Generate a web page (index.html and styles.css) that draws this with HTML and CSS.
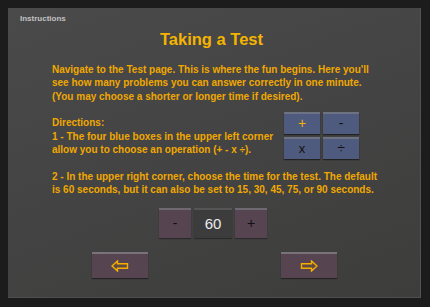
FILE: index.html
```html
<!DOCTYPE html>
<html>
<head>
<meta charset="utf-8">
<link rel="stylesheet" href="styles.css">
</head>
<body>
<div class="panel">
  <div class="label">Instructions</div>
  <div class="content">
    <h1 class="title">Taking a Test</h1>
    <p class="para">Navigate to the Test page. This is where the fun begins. Here you'll<br>see how many problems you can answer correctly in one minute.<br>(You may choose a shorter or longer time if desired).</p>
    <div class="dir-row">
      <p class="para dir-text">Directions:<br>1 - The four blue boxes in the upper left corner<br>allow you to choose an operation (+ - x ÷).</p>
      <div class="ops">
        <div class="op op-active">+</div>
        <div class="op">-</div>
        <div class="op op-x">x</div>
        <div class="op">÷</div>
      </div>
    </div>
    <p class="para">2 - In the upper right corner, choose the time for the test. The default<br>is 60 seconds, but it can also be set to 15, 30, 45, 75, or 90 seconds.</p>
    <div class="timer">
      <div class="tbtn">-</div>
      <div class="tval">60</div>
      <div class="tbtn">+</div>
    </div>
    <div class="nav">
      <div class="navbtn">
        <svg width="18" height="12" viewBox="0 0 18 12"><path d="M1 6 L6.5 1 L6.5 3.8 L16.5 3.8 L16.5 8.2 L6.5 8.2 L6.5 11 Z" fill="#5e4a3e" stroke="#f5ae00" stroke-width="1.4" stroke-linejoin="miter"/></svg>
      </div>
      <div class="navbtn">
        <svg width="18" height="12" viewBox="0 0 18 12"><path d="M17 6 L11.5 1 L11.5 3.8 L1.5 3.8 L1.5 8.2 L11.5 8.2 L11.5 11 Z" fill="#5e4a3e" stroke="#f5ae00" stroke-width="1.4" stroke-linejoin="miter"/></svg>
      </div>
    </div>
  </div>
</div>
</body>
</html>
```
FILE: styles.css
```css
html, body {
  margin: 0;
  padding: 0;
}
body {
  background: #1c1c1c;
  width: 430px;
  height: 307px;
  overflow: hidden;
  font-family: "Liberation Sans", Arial, sans-serif;
}
.panel {
  margin: 8px 0 0 8px;
  width: 413px;
  height: 290px;
  box-sizing: border-box;
  background: linear-gradient(160deg, #4a4a4a 0%, #444444 45%, #3d3d3c 100%);
  border-right: 1px solid #525252;
  border-bottom: 1px solid #4e4e4e;
  padding-top: 6px;
}
.label {
  padding-left: 12px;
  font-size: 8px;
  line-height: 10px;
  font-weight: bold;
  color: #c2c2c2;
}
.content {
  padding-left: 44px;
  padding-right: 49px;
}
.title {
  margin: 5px 0 0 0;
  font-size: 16.5px;
  line-height: 20px;
  font-weight: bold;
  color: #f5b400;
  text-align: center;
}
.para {
  margin: 14px 0 0 0;
  font-size: 10px;
  line-height: 13.33px;
  font-weight: bold;
  color: #f0a800;
  white-space: nowrap;
}
.dir-row {
  display: flex;
  align-items: flex-start;
  margin-top: 13.33px;
  margin-bottom: 13.33px;
}
.dir-text {
  margin: 0;
  width: 232px;
}
.ops {
  display: grid;
  grid-template-columns: 36px 36px;
  grid-auto-rows: 22px;
  gap: 3px;
  margin: -4.6px 0 -3px 0;
}
.dir-row + .para {
  margin-top: 0;
}
.op {
  background: #4e5b7e;
  border-top: 2px solid #6d7283;
  box-sizing: border-box;
  box-shadow: 0 1px 1px #222;
  color: #111;
  font-size: 14px;
  line-height: 19px;
  text-align: center;
}
.op-active {
  color: #f5b000;
}
.op-x {
  font-size: 13px;
}
.timer {
  display: flex;
  gap: 3px;
  margin: 12px 0 0 107px;
}
.tbtn, .tval {
  height: 30px;
  box-sizing: border-box;
  border-top: 2px solid #6e6870;
  box-shadow: 0 1px 1px #2a2a2a;
  text-align: center;
  line-height: 27px;
}
.tbtn {
  width: 32px;
  background: #564451;
  color: #111;
  font-size: 14px;
}
.tval {
  width: 38px;
  background: #3c3c3c;
  border-top-color: #555;
  color: #ececec;
  font-size: 15px;
}
.nav {
  display: flex;
  justify-content: space-between;
  width: 245px;
  margin: 14px 0 0 40px;
}
.navbtn {
  width: 56px;
  height: 26px;
  box-sizing: border-box;
  background: #564551;
  border-top: 2px solid #7a7279;
  box-shadow: 0 1px 1px #232323;
  display: flex;
  align-items: center;
  justify-content: center;
}
.navbtn svg {
  display: block;
}
```
